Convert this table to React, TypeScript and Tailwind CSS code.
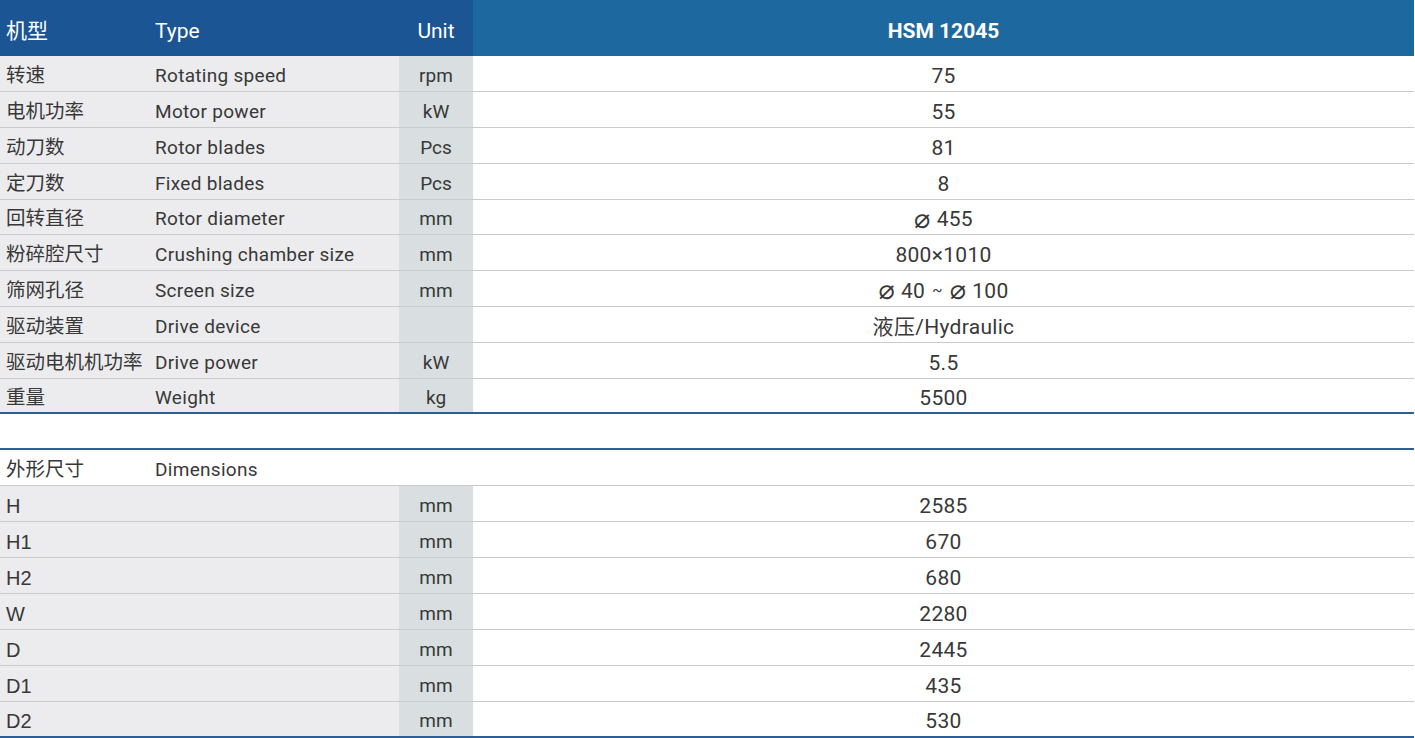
import React from "react";

function Dia() {
  return (
    <span className="font-['DejaVu_Sans',sans-serif] text-[27px] leading-none mr-[6px] relative top-[-1px]">⌀</span>
  );
}

const rows: [string, string, string, React.ReactNode][] = [
  ["转速", "Rotating speed", "rpm", "75"],
  ["电机功率", "Motor power", "kW", "55"],
  ["动刀数", "Rotor blades", "Pcs", "81"],
  ["定刀数", "Fixed blades", "Pcs", "8"],
  ["回转直径", "Rotor diameter", "mm", <><Dia />455</>],
  ["粉碎腔尺寸", "Crushing chamber size", "mm", "800×1010"],
  ["筛网孔径", "Screen size", "mm", <><Dia />40<span className="text-[15px] relative top-[-1px] mx-[7px]">~</span><Dia />100</>],
  ["驱动装置", "Drive device", "", "液压/Hydraulic"],
  ["驱动电机机功率", "Drive power", "kW", "5.5"],
  ["重量", "Weight", "kg", "5500"],
];

const dims: [string, string][] = [
  ["H", "2585"],
  ["H1", "670"],
  ["H2", "680"],
  ["W", "2280"],
  ["D", "2445"],
  ["D1", "435"],
  ["D2", "530"],
];

const font = "font-['Roboto','Noto_Sans_CJK_SC',sans-serif]";

export default function App() {
  return (
    <div className={`w-[1414px] bg-white text-[#383838] leading-[24px] ${font}`}>
      {/* header */}
      <div className="grid grid-cols-[149px_250px_74px_1fr] h-[56px] text-white">
        <div className="bg-[#1c5594] flex items-center pl-[6px] pt-[5px] text-[21px]">机型</div>
        <div className="bg-[#1c5594] flex items-center pl-[6px] pt-[5px] text-[21px]">Type</div>
        <div className="bg-[#1c5594] flex items-center justify-center pt-[5px] text-[21px]">Unit</div>
        <div className="bg-[#1e68a0] flex items-center justify-center pt-[5px] text-[21px] font-bold">HSM 12045</div>
      </div>
      {rows.map(([cn, en, unit, val], i) => (
        <div
          key={i}
          className={`grid grid-cols-[149px_250px_74px_1fr] grid-rows-[100%] overflow-hidden ${i === 4 || i === 9 ? "h-[35px]" : "h-[36px]"} ${
            i === rows.length - 1 ? "border-b-2 border-[#2d5f96]" : "border-b border-[#cacaca]"
          }`}
        >
          <div className="bg-[#ececee] flex items-center pl-[6px] pt-[4px] text-[19.5px] whitespace-nowrap">{cn}</div>
          <div className="bg-[#ececee] flex items-center pl-[6px] pt-[4px] text-[19px] tracking-[0.3px] whitespace-nowrap">{en}</div>
          <div className="bg-[#d9dfe0] flex items-center justify-center pt-[4px] text-[19px]">{unit}</div>
          <div className="bg-white flex items-center justify-center pt-[4px] text-[21px] tracking-[0.3px] whitespace-nowrap">{val}</div>
        </div>
      ))}
      <div className="h-[36px] border-b-2 border-[#2d5f96]" />
      <div className="grid grid-cols-[149px_250px_74px_1fr] grid-rows-[100%] overflow-hidden h-[36px] border-b border-[#cacaca]">
        <div className="flex items-center pl-[6px] pt-[4px] text-[19.5px]">外形尺寸</div>
        <div className="flex items-center pl-[6px] pt-[4px] text-[19px] tracking-[0.3px]">Dimensions</div>
        <div />
        <div />
      </div>
      {dims.map(([k, v], i) => (
        <div
          key={k}
          className={`grid grid-cols-[149px_250px_74px_1fr] grid-rows-[100%] overflow-hidden h-[36px] ${
            i === dims.length - 1 ? "border-b-2 border-[#2d5f96]" : "border-b border-[#cacaca]"
          }`}
        >
          <div className="bg-[#ececee] flex items-center pl-[6px] pt-[4px] text-[20px] font-['Liberation_Sans',sans-serif]">{k}</div>
          <div className="bg-[#ececee]" />
          <div className="bg-[#d9dfe0] flex items-center justify-center pt-[4px] text-[19px]">mm</div>
          <div className="bg-white flex items-center justify-center pt-[4px] text-[21px] tracking-[0.3px]">{v}</div>
        </div>
      ))}
    </div>
  );
}
